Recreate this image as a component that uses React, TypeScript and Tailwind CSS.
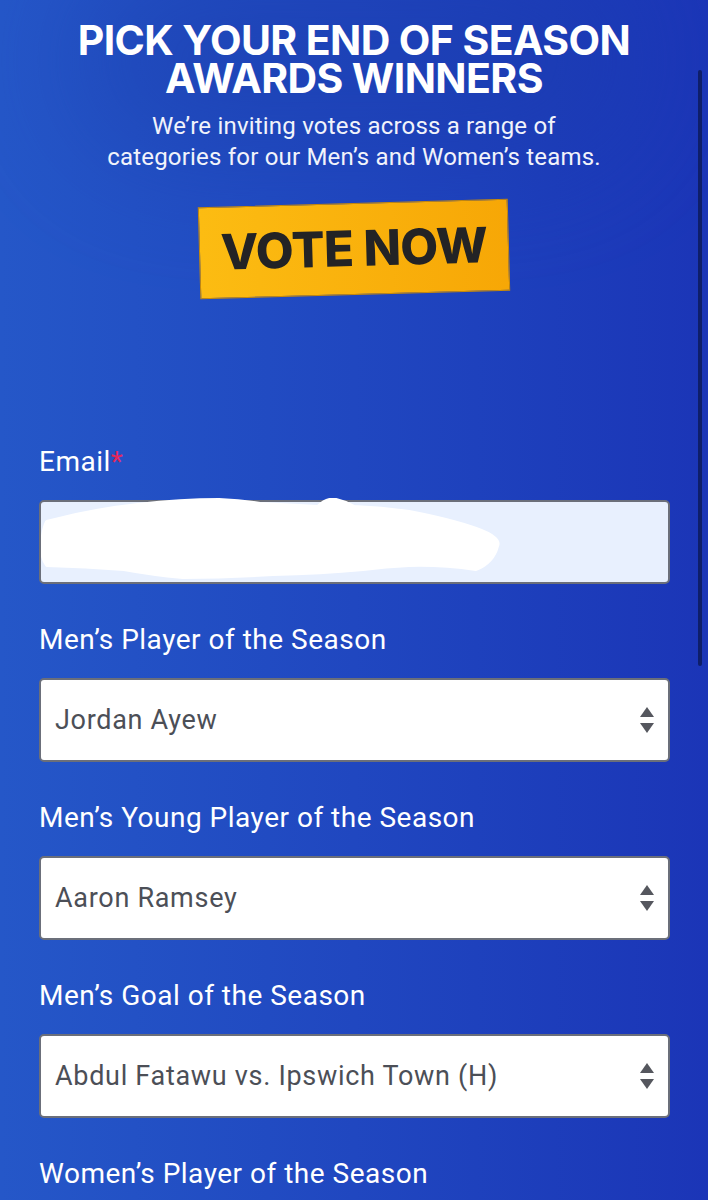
const fields = [
  { label: "Men’s Player of the Season", value: "Jordan Ayew" },
  { label: "Men’s Young Player of the Season", value: "Aaron Ramsey" },
  { label: "Men’s Goal of the Season", value: "Abdul Fatawu vs. Ipswich Town (H)" },
]

const Arrows = () => (
  <svg width="16" height="28" viewBox="0 0 16 28" className="shrink-0">
    <path d="M8 1 L15 11 L1 11 Z" fill="#55575e" />
    <path d="M1 17 L15 17 L8 27 Z" fill="#55575e" />
  </svg>
)

const SelectBox = ({ value }: { value: string }) => (
  <div className="flex h-[84px] items-center justify-between rounded-[5px] border-2 border-[#6b6f7a] bg-white pl-[14px] pr-[13px]">
    <span className="text-[27px] tracking-[0.7px] text-[#4c4f57]">{value}</span>
    <Arrows />
  </div>
)

// the white scribble that hides the email address
const Scribble = () => (
  <svg width="470" height="86" viewBox="0 0 470 86" className="absolute left-0 top-[-4px]">
    <path
      d="M6 24 Q50 12 97 7 Q140 2 178 2 Q200 3 219 6 L277 9 Q286 0 295 2 Q304 4 313 9 Q340 10 368 14 Q410 22 435 31 Q460 40 456 48 Q452 64 435 71 Q400 66 368 67 Q345 68 322 71 Q280 75 232 76 Q185 79 142 79 Q110 76 83 71 Q45 68 6 67 Q0 58 1 47 Q2 32 6 24 Z"
      fill="#ffffff"
      stroke="#ffffff"
      strokeWidth="4"
      strokeLinejoin="round"
    />
  </svg>
)

export default function App() {
  return (
    <div
      className="relative h-[1200px] overflow-hidden bg-gradient-to-r from-[#2557c8] via-[#2047c0] to-[#1b35b7] text-white"
      style={{ fontFamily: "Roboto, 'Noto Sans', sans-serif" }}
    >
      <div className="pointer-events-none absolute left-1/2 top-[-40px] h-[200px] w-[560px] -translate-x-1/2 rounded-full bg-[#1a3aa8] opacity-40 blur-3xl" />

      <div className="relative flex flex-col items-center pt-[21px]">
        <h1
          className="flex flex-col items-center text-center text-[41px] font-bold tracking-[-0.6px]"
          style={{ fontFamily: "Inter, 'Noto Sans', sans-serif" }}
        >
          <span className="block h-[38px] leading-[38px]">PICK YOUR END OF SEASON</span>
          <span className="block h-[38px] leading-[38px]">AWARDS WINNERS</span>
        </h1>
        <p className="mt-[14px] text-center text-[24px] leading-[31px] tracking-[0.2px] text-[#f1f3fb]">
          We’re inviting votes across a range of
          <br />
          categories for our Men’s and Women’s teams.
        </p>

        <div className="mt-[30px] flex h-[92px] w-[310px] -rotate-[1.6deg] items-center justify-center border border-[#c98a08] bg-gradient-to-r from-[#fcbc12] to-[#f7a706]">
          <span
            className="text-[49px] font-extrabold tracking-[-0.6px] text-[#232325]"
            style={{ fontFamily: "Inter, 'Noto Sans', sans-serif" }}
          >
            VOTE NOW
          </span>
        </div>
      </div>

      <div className="relative mt-[151px] flex flex-col pl-[39px] pr-[38px]">
        <label className="text-[28px] leading-[32px] tracking-[0.5px]">
          Email<span className="text-[#e5265a]">*</span>
        </label>
        <div className="relative mt-[22px] h-[84px] rounded-[5px] border-2 border-[#6b6f7a] bg-[#e8f0fe]">
          <Scribble />
        </div>

        {fields.map((f) => (
          <div key={f.label} className="mt-[40px] flex flex-col">
            <label className="text-[28px] leading-[32px] tracking-[0.5px]">{f.label}</label>
            <div className="mt-[22px]">
              <SelectBox value={f.value} />
            </div>
          </div>
        ))}

        <label className="mt-[40px] text-[28px] leading-[32px] tracking-[0.5px]">
          Women’s Player of the Season
        </label>
      </div>

      <div className="absolute right-[6px] top-[70px] h-[596px] w-[4px] rounded-full bg-[#0e1e6a]" />
    </div>
  )
}
